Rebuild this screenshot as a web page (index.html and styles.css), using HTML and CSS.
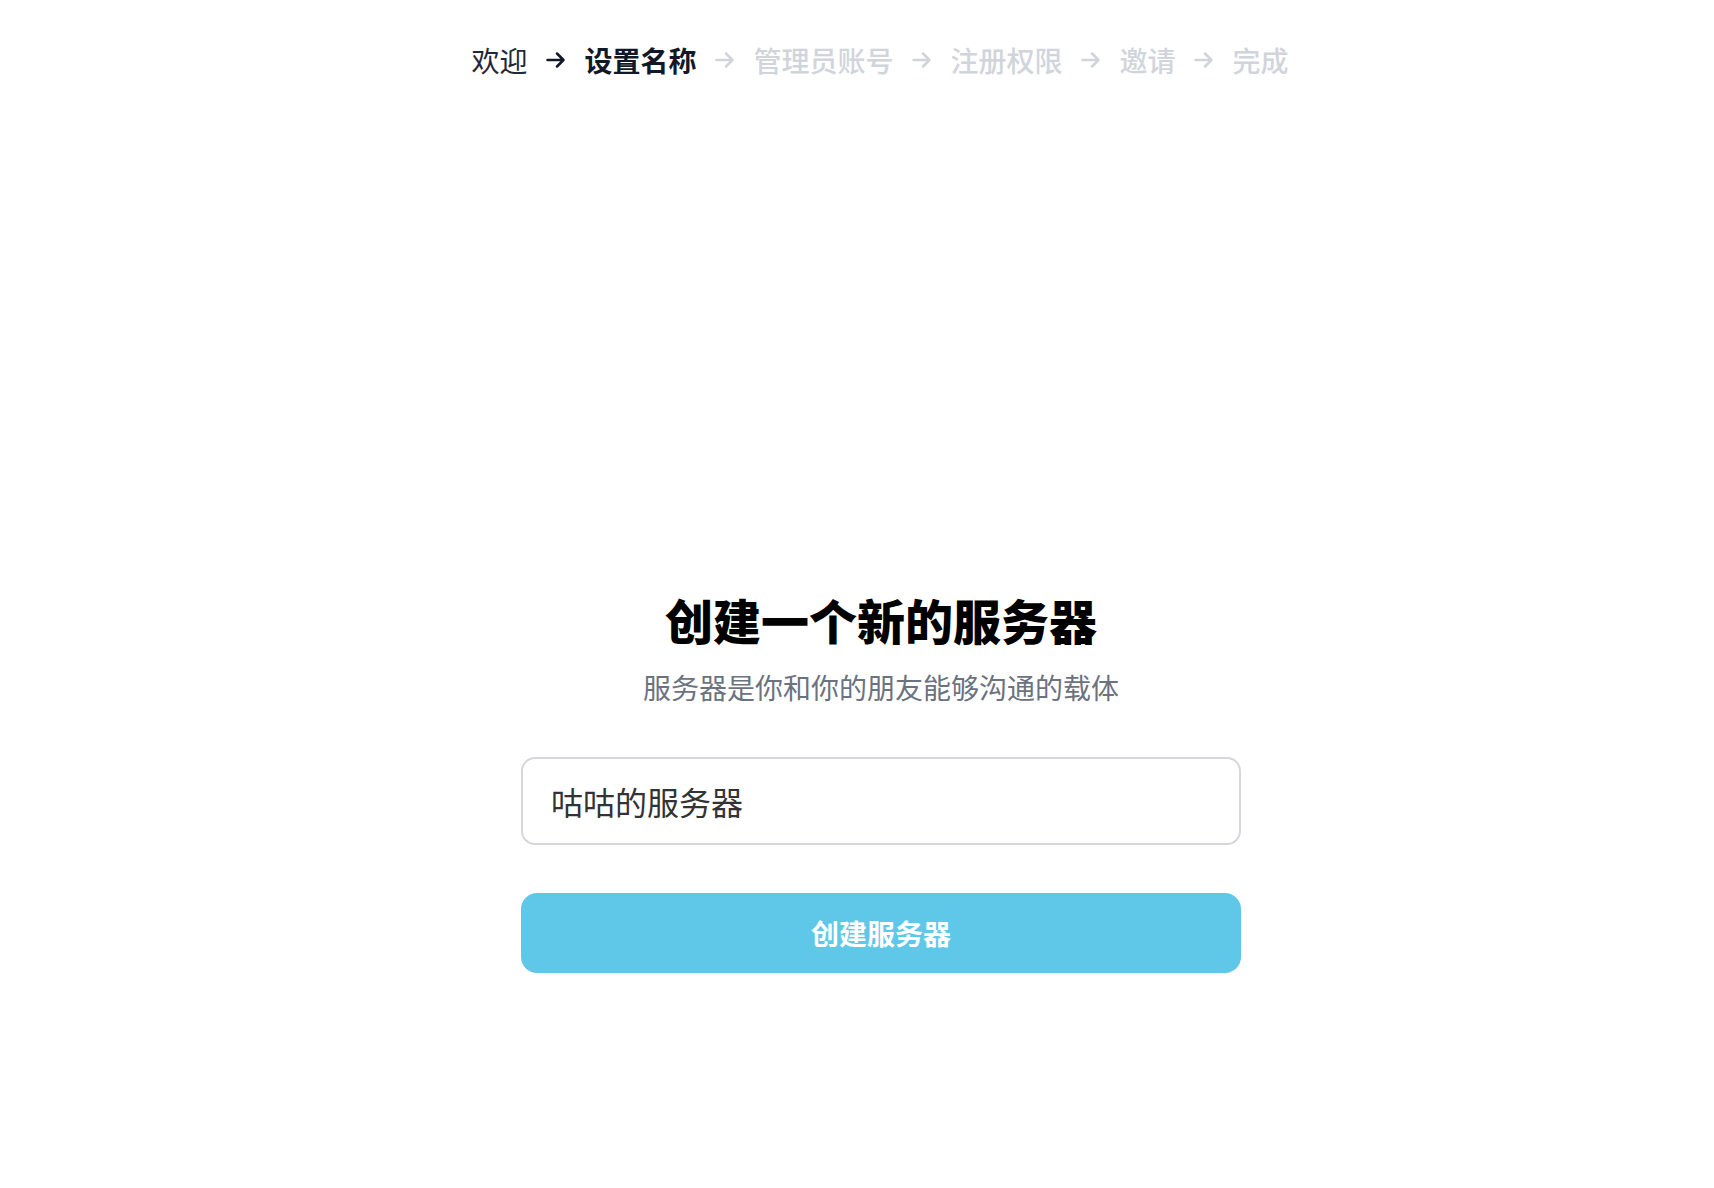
FILE: index.html
```html
<!DOCTYPE html>
<html lang="zh-CN">
<head>
<meta charset="utf-8">
<title>创建服务器</title>
<link rel="stylesheet" href="styles.css">
</head>
<body>
<div class="page">
  <nav class="steps">
    <span class="step done">欢迎</span>
    <svg class="arrow dark" viewBox="0 0 24 24"><path d="M3.5 12h16M13 5.5l6.5 6.5-6.5 6.5"/></svg>
    <span class="step current">设置名称</span>
    <svg class="arrow" viewBox="0 0 24 24"><path d="M3.5 12h16M13 5.5l6.5 6.5-6.5 6.5"/></svg>
    <span class="step">管理员账号</span>
    <svg class="arrow" viewBox="0 0 24 24"><path d="M3.5 12h16M13 5.5l6.5 6.5-6.5 6.5"/></svg>
    <span class="step">注册权限</span>
    <svg class="arrow" viewBox="0 0 24 24"><path d="M3.5 12h16M13 5.5l6.5 6.5-6.5 6.5"/></svg>
    <span class="step">邀请</span>
    <svg class="arrow" viewBox="0 0 24 24"><path d="M3.5 12h16M13 5.5l6.5 6.5-6.5 6.5"/></svg>
    <span class="step">完成</span>
  </nav>
  <main class="setup">
    <h1 class="title">创建一个新的服务器</h1>
    <p class="subtitle">服务器是你和你的朋友能够沟通的载体</p>
    <input class="name-input" type="text" value="咕咕的服务器">
    <button class="create-btn" type="button">创建服务器</button>
  </main>
</div>
</body>
</html>
```

FILE: styles.css
```css
html, body {
  margin: 0;
  padding: 0;
  background: #ffffff;
}

body {
  font-family: "Noto Sans CJK SC", "Noto Sans", sans-serif;
}

.page {
  box-sizing: border-box;
  width: 1714px;
  min-height: 1188px;
  padding-left: 46px;
  display: flex;
  flex-direction: column;
  align-items: center;
}

.steps {
  display: flex;
  align-items: center;
  gap: 16.5px;
  padding-top: 40px;
  height: 40px;
}

.step {
  font-size: 28px;
  line-height: 40px;
  color: #d1d5db;
  font-weight: 500;
}

.step.done {
  color: #1f2937;
  font-weight: 400;
}

.step.current {
  color: #111827;
  font-weight: 700;
}

.arrow {
  width: 24px;
  height: 24px;
  fill: none;
  stroke: #d1d5db;
  stroke-width: 2.5;
  stroke-linecap: round;
  stroke-linejoin: round;
}

.arrow.dark {
  stroke: #111827;
}

.setup {
  display: flex;
  flex-direction: column;
  align-items: center;
  margin-top: 507px;
  margin-left: 2px;
}

.title {
  margin: 0;
  font-size: 48px;
  line-height: 64px;
  font-weight: 900;
  color: #000000;
}

.subtitle {
  margin: 18px 0 0;
  font-size: 28px;
  line-height: 36px;
  color: #6b7280;
}

.name-input {
  box-sizing: border-box;
  width: 720px;
  height: 88px;
  margin-top: 52px;
  padding: 0 28px;
  border: 2px solid #d6d6dc;
  border-radius: 14px;
  font-family: "Noto Sans CJK SC", "Noto Sans", sans-serif;
  font-size: 32px;
  color: #333333;
  background: #ffffff;
  outline: none;
}

.create-btn {
  box-sizing: border-box;
  width: 720px;
  height: 80px;
  margin-top: 48px;
  border: none;
  border-radius: 16px;
  background: #5fc8e9;
  color: #ffffff;
  font-family: "Noto Sans CJK SC", "Noto Sans", sans-serif;
  font-size: 28px;
  font-weight: 700;
  cursor: pointer;
}
```
